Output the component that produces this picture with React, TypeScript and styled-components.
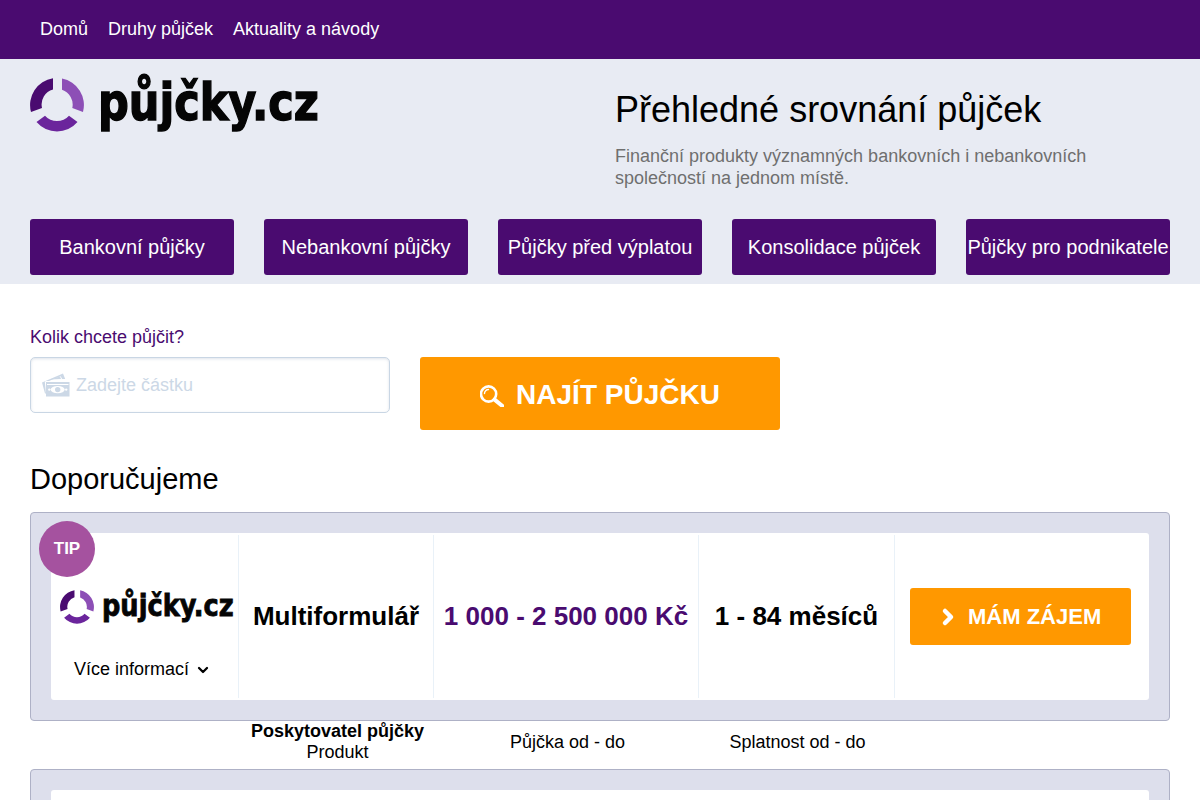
import React from "react";
import styled, { createGlobalStyle } from "styled-components";
import { ChevronDown, ChevronRight } from "lucide-react";

const Global = createGlobalStyle`
  * { box-sizing: border-box; }
  html, body { margin: 0; padding: 0; background: #fff; overflow: hidden; height: 800px; }
  body { font-family: "Liberation Sans", Arial, sans-serif; color: #000; }
`;

const Nav = styled.nav`
  height: 59px; background: #4a0b70; display: flex; align-items: center;
  gap: 20px; padding: 0 40px;
`;
const NavLink = styled.a`
  color: #fff; font-size: 18px; line-height: 21px;
`;
const Header = styled.header`
  height: 225px; background: #e8ebf3; padding: 0 30px;
  display: flex; flex-direction: column; justify-content: space-between;
`;
const HeaderTop = styled.div`
  display: flex; justify-content: space-between;
`;
const Brand = styled.div`
  padding-top: 19px;
`;
const LogoWrap = styled.div<{ $h: number; $gap: number }>`
  display: flex; align-items: center; gap: ${(p) => p.$gap}px; height: ${(p) => p.$h}px;
`;
const LogoText = styled.span<{ $size: number; $stroke: number; $shift: number }>`
  display: inline-block;
  font-family: "DejaVu Sans Condensed", "DejaVu Sans", sans-serif;
  font-stretch: condensed; font-weight: 700; font-size: ${(p) => p.$size}px;
  line-height: 1; color: #050505; white-space: nowrap;
  -webkit-text-stroke: ${(p) => p.$stroke}px #050505;
  margin-top: ${(p) => p.$shift}px;
  transform: scaleX(0.92); transform-origin: left center;
`;
const Claim = styled.div`
  width: 555px; padding-top: 29px;
`;
const Title = styled.h1`
  margin: 0; font-size: 36px; font-weight: 400; line-height: 43px; color: #000;
`;
const Lead = styled.p`
  margin: 14px 0 0; font-size: 18px; line-height: 22px; color: #6f6f6f; width: 500px;
`;
const Cats = styled.div`
  display: grid; grid-template-columns: repeat(5, 204px); justify-content: space-between;
  padding-bottom: 9px;
`;
const Cat = styled.a`
  height: 56px; background: #4a0b70; border-radius: 3px; color: #fff; font-size: 20px;
  display: flex; align-items: center; justify-content: center; white-space: nowrap;
`;
const Main = styled.main`
  padding: 43px 30px 0;
`;
const Label = styled.label`
  display: block; font-size: 18px; line-height: 21px; color: #4a0b70; margin-bottom: 9px;
`;
const SearchRow = styled.div`
  display: flex; gap: 30px; align-items: flex-start;
`;
const InputBox = styled.div`
  width: 360px; height: 56px; border: 1px solid #c9d6e4; border-radius: 5px;
  box-shadow: inset 0 1px 3px rgba(160, 175, 195, 0.35);
  display: flex; align-items: center; gap: 6px; padding: 0 11px; background: #fff;
`;
const Placeholder = styled.span`
  font-size: 18px; color: #ccd8e6;
`;
const FindButton = styled.button`
  width: 360px; height: 73px; background: #ff9800; border: 0; border-radius: 3px; color: #fff;
  font: 700 28px "Liberation Sans", Arial, sans-serif; padding: 2px 0 0;
  display: flex; align-items: center; justify-content: center; gap: 12px;
`;
const Section = styled.h2`
  margin: 31px 0 15px; font-size: 29px; font-weight: 400; line-height: 36px;
`;
const Card = styled.article`
  position: relative; height: 209px; background: #dddfec; border: 1px solid #aeb1c6;
  border-radius: 4px; padding: 20px;
`;
const Inner = styled.div`
  height: 167px; background: #fff; border-radius: 3px; padding: 2px 0;
  display: grid; grid-template-columns: 188px 195px 265px 196px 254px;
`;
const Tip = styled.div`
  position: absolute; left: 8px; top: 8px; width: 56px; height: 56px; border-radius: 50%;
  background: #a5529f; color: #fff; font-size: 17px; font-weight: 700;
  display: flex; align-items: center; justify-content: center;
`;
const Cell = styled.div`
  border-right: 1px solid #e9f1f8; display: flex; align-items: center; justify-content: center;
  white-space: nowrap; font-size: 26px; font-weight: 700;
`;
const Amount = styled(Cell)`
  color: #4a0b70;
`;
const ProviderCell = styled.div`
  border-right: 1px solid #e9f1f8; display: flex; flex-direction: column; align-items: flex-start;
  padding: 55px 0 0 9px;
`;
const More = styled.div`
  display: flex; align-items: center; gap: 6px; font-size: 18px; line-height: 21px;
  margin: 35px 0 0 14px; white-space: nowrap;
`;
const ActionCell = styled.div`
  display: flex; justify-content: flex-start; padding: 53px 0 0 15px;
`;
const Interest = styled.button`
  width: 221px; height: 57px; background: #ff9800; border: 0; border-radius: 3px; color: #fff;
  font: 700 22px "Liberation Sans", Arial, sans-serif; padding: 1px 0 0 26px;
  display: flex; align-items: center; gap: 8px;
`;
const Legend = styled.div`
  display: grid; grid-template-columns: 210px 195px 265px 195px; height: 48px; padding-bottom: 6px;
  align-items: center; text-align: center; font-size: 18px; line-height: 21px;
`;
const LegendCell = styled.div`
  white-space: nowrap;
`;
const Strong = styled.strong`
  display: block;
`;

function Ring({ size }: { size: number }) {
  return (
    <svg width={size} height={size} viewBox="0 0 54 54" aria-hidden="true">
      <path fill="#4a0b70" d="M23 .3A27 27 0 0 0 1 34L12 30A15.6 15.6 0 0 1 23 11.5Z" />
      <path fill="#8d4fb6" d="M32 .5A27 27 0 0 1 53 34L42.3 30A15.6 15.6 0 0 0 32 11.8Z" />
      <path fill="#6b259c" d="M6.5 44A27 27 0 0 0 47.5 44L39 37.7A16 16 0 0 1 15 37.7Z" />
    </svg>
  );
}

function Logo({ ring, text, gap, stroke, shift }: { ring: number; text: number; gap: number; stroke: number; shift: number }) {
  return (
    <LogoWrap $h={ring} $gap={gap}>
      <Ring size={ring} />
      <LogoText $size={text} $stroke={stroke} $shift={shift}>půjčky.cz</LogoText>
    </LogoWrap>
  );
}

function MoneyIcon() {
  return (
    <svg width="28" height="24" viewBox="0 0 28 24" aria-hidden="true">
      <path fill="#ccd8e6" d="M0 9.5 21 .5l2.2 5.5h-3L18.6 3.2 7 8H4.2L2.8 8.8 4 20.5H3z" />
      <path fill="#ccd8e6" d="M7.5 6.5 18 3.5l1 2.5z" />
      <rect x="4" y="9" width="23.5" height="14.5" fill="#ccd8e6" />
      <rect x="5" y="11" width="21.5" height="1" fill="#fff" />
      <ellipse cx="15.7" cy="16.6" rx="7" ry="3.7" fill="#fff" />
      <circle cx="15.7" cy="16.6" r="2.7" fill="#ccd8e6" />
      <circle cx="7.3" cy="16.6" r="1.2" fill="#fff" />
      <circle cx="24.2" cy="16.6" r="1.2" fill="#fff" />
    </svg>
  );
}

function SearchIcon() {
  return (
    <svg width="24" height="24" viewBox="0 0 24 24" fill="none" stroke="#fff" aria-hidden="true">
      <circle cx="8.6" cy="11" r="7.6" strokeWidth="2.6" />
      <path d="M14.6 16.6 22.4 23" strokeWidth="4" strokeLinecap="round" />
      <path d="M4.5 10.5a4 4 0 0 1 4-4" strokeWidth="1.4" strokeLinecap="round" />
    </svg>
  );
}

const navItems = ["Domů", "Druhy půjček", "Aktuality a návody"];
const cats = ["Bankovní půjčky", "Nebankovní půjčky", "Půjčky před výplatou", "Konsolidace půjček", "Půjčky pro podnikatele"];

export default function App() {
  return (
    <>
      <Global />
      <Nav>
        {navItems.map((n) => (
          <NavLink key={n}>{n}</NavLink>
        ))}
      </Nav>
      <Header>
        <HeaderTop>
          <Brand>
            <Logo ring={54} text={52} gap={14} stroke={1.4} shift={-6} />
          </Brand>
          <Claim>
            <Title>Přehledné srovnání půjček</Title>
            <Lead>Finanční produkty významných bankovních i nebankovních společností na jednom místě.</Lead>
          </Claim>
        </HeaderTop>
        <Cats>
          {cats.map((c) => (
            <Cat key={c}>{c}</Cat>
          ))}
        </Cats>
      </Header>
      <Main>
        <Label>Kolik chcete půjčit?</Label>
        <SearchRow>
          <InputBox>
            <MoneyIcon />
            <Placeholder>Zadejte částku</Placeholder>
          </InputBox>
          <FindButton>
            <SearchIcon />
            NAJÍT PŮJČKU
          </FindButton>
        </SearchRow>
        <Section>Doporučujeme</Section>
        <Card>
          <Tip>TIP</Tip>
          <Inner>
            <ProviderCell>
              <Logo ring={34} text={31} gap={8} stroke={0.8} shift={-3} />
              <More>
                Více informací <ChevronDown size={16} strokeWidth={3.4} />
              </More>
            </ProviderCell>
            <Cell>Multiformulář</Cell>
            <Amount>1 000 - 2 500 000 Kč</Amount>
            <Cell>1 - 84 měsíců</Cell>
            <ActionCell>
              <Interest>
                <ChevronRight size={24} strokeWidth={4.5} />
                MÁM ZÁJEM
              </Interest>
            </ActionCell>
          </Inner>
        </Card>
        <Legend>
          <LegendCell />
          <LegendCell>
            <Strong>Poskytovatel půjčky</Strong>
            Produkt
          </LegendCell>
          <LegendCell>Půjčka od - do</LegendCell>
          <LegendCell>Splatnost od - do</LegendCell>
        </Legend>
        <Card>
          <Inner />
        </Card>
      </Main>
    </>
  );
}
